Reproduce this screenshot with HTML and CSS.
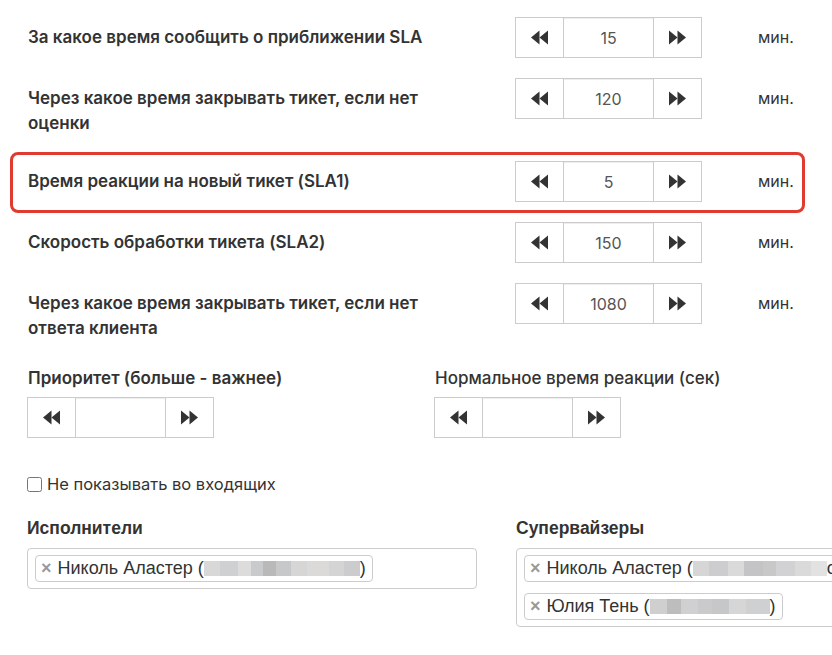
FILE: index.html
```html
<!DOCTYPE html>
<html lang="ru">
<head>
    <meta charset="UTF-8">
    <meta name="viewport" content="width=device-width, initial-scale=1.0">
    <title>Настройки SLA</title>
    <link rel="stylesheet" href="styles.css">
</head>
<body>
    <div class="settings">
        <div class="sla-row">
            <label class="sla-label">За какое время сообщить о приближении SLA</label>
            <div class="spinner">
                <button class="spin-btn"><svg viewBox="0 0 18 15"><polygon points="9,0 9,15 0,7.5"/><polygon points="18,0 18,15 9,7.5"/></svg></button>
                <input class="spin-value" type="text" value="15">
                <button class="spin-btn"><svg viewBox="0 0 18 15"><polygon points="0,0 0,15 9,7.5"/><polygon points="9,0 9,15 18,7.5"/></svg></button>
            </div>
            <span class="unit">мин.</span>
        </div>

        <div class="sla-row">
            <label class="sla-label">Через какое время закрывать тикет, если нет оценки</label>
            <div class="spinner">
                <button class="spin-btn"><svg viewBox="0 0 18 15"><polygon points="9,0 9,15 0,7.5"/><polygon points="18,0 18,15 9,7.5"/></svg></button>
                <input class="spin-value" type="text" value="120">
                <button class="spin-btn"><svg viewBox="0 0 18 15"><polygon points="0,0 0,15 9,7.5"/><polygon points="9,0 9,15 18,7.5"/></svg></button>
            </div>
            <span class="unit">мин.</span>
        </div>

        <!-- выделенная строка -->
        <div class="highlight">
            <div class="sla-row">
                <label class="sla-label">Время реакции на новый тикет (SLA1)</label>
                <div class="spinner">
                    <button class="spin-btn"><svg viewBox="0 0 18 15"><polygon points="9,0 9,15 0,7.5"/><polygon points="18,0 18,15 9,7.5"/></svg></button>
                    <input class="spin-value" type="text" value="5">
                    <button class="spin-btn"><svg viewBox="0 0 18 15"><polygon points="0,0 0,15 9,7.5"/><polygon points="9,0 9,15 18,7.5"/></svg></button>
                </div>
                <span class="unit">мин.</span>
            </div>
        </div>

        <div class="sla-row">
            <label class="sla-label">Скорость обработки тикета (SLA2)</label>
            <div class="spinner">
                <button class="spin-btn"><svg viewBox="0 0 18 15"><polygon points="9,0 9,15 0,7.5"/><polygon points="18,0 18,15 9,7.5"/></svg></button>
                <input class="spin-value" type="text" value="150">
                <button class="spin-btn"><svg viewBox="0 0 18 15"><polygon points="0,0 0,15 9,7.5"/><polygon points="9,0 9,15 18,7.5"/></svg></button>
            </div>
            <span class="unit">мин.</span>
        </div>

        <div class="sla-row">
            <label class="sla-label">Через какое время закрывать тикет, если нет ответа клиента</label>
            <div class="spinner">
                <button class="spin-btn"><svg viewBox="0 0 18 15"><polygon points="9,0 9,15 0,7.5"/><polygon points="18,0 18,15 9,7.5"/></svg></button>
                <input class="spin-value" type="text" value="1080">
                <button class="spin-btn"><svg viewBox="0 0 18 15"><polygon points="0,0 0,15 9,7.5"/><polygon points="9,0 9,15 18,7.5"/></svg></button>
            </div>
            <span class="unit">мин.</span>
        </div>

        <div class="pair-row">
            <div class="field">
                <label class="field-label">Приоритет (больше - важнее)</label>
                <div class="spinner">
                    <button class="spin-btn"><svg viewBox="0 0 18 15"><polygon points="9,0 9,15 0,7.5"/><polygon points="18,0 18,15 9,7.5"/></svg></button>
                    <input class="spin-value" type="text" value="">
                    <button class="spin-btn"><svg viewBox="0 0 18 15"><polygon points="0,0 0,15 9,7.5"/><polygon points="9,0 9,15 18,7.5"/></svg></button>
                </div>
            </div>
            <div class="field">
                <label class="field-label light">Нормальное время реакции (сек)</label>
                <div class="spinner">
                    <button class="spin-btn"><svg viewBox="0 0 18 15"><polygon points="9,0 9,15 0,7.5"/><polygon points="18,0 18,15 9,7.5"/></svg></button>
                    <input class="spin-value" type="text" value="">
                    <button class="spin-btn"><svg viewBox="0 0 18 15"><polygon points="0,0 0,15 9,7.5"/><polygon points="9,0 9,15 18,7.5"/></svg></button>
                </div>
            </div>
        </div>

        <label class="check-row"><input type="checkbox" class="check">Не показывать во входящих</label>

        <div class="users-row">
            <div class="field">
                <label class="users-label">Исполнители</label>
                <div class="tag-box">
                    <span class="tag"><span class="tag-x">×</span>Николь Аластер (<span class="blur blur-a"></span>)</span>
                </div>
            </div>
            <div class="field">
                <label class="users-label">Супервайзеры</label>
                <div class="tag-box">
                    <span class="tag"><span class="tag-x">×</span>Николь Аластер (<span class="blur blur-b"></span>om)</span>
                    <span class="tag"><span class="tag-x">×</span>Юлия Тень (<span class="blur blur-c"></span>)</span>
                </div>
            </div>
        </div>
    </div>
</body>
</html>
```

FILE: styles.css
```css
* {
    margin: 0;
    padding: 0;
    box-sizing: border-box;
}

html {
    overflow: hidden;
}

body {
    background-color: #ffffff;
    font-family: Inter, "Open Sans", sans-serif;
    color: #333333;
    font-size: 16px;
}

.settings {
    width: 1000px;
    padding: 17px 0 0 27px;
}

/* строки SLA */
.sla-row {
    display: grid;
    grid-template-columns: 488px 243px auto;
    align-items: start;
    margin-bottom: 20px;
}

.sla-label {
    display: block;
    padding: 8px 57px 5px 1px;
    font-size: 17px;
    font-weight: 600;
    line-height: 25px;
}

.unit {
    padding-top: 8px;
    line-height: 25px;
}

.highlight {
    width: 795px;
    margin: -9px 0 9px -17px;
    padding: 6px 0 8px 14px;
    border: 3px solid #e03b31;
    border-radius: 8px;
}

.highlight .sla-row {
    margin-bottom: 0;
}

/* спиннер */
.spinner {
    display: flex;
    width: 187px;
    height: 41px;
    border: 1px solid #cccccc;
}

.spin-btn {
    width: 47px;
    border: none;
    background-color: #ffffff;
    display: flex;
    align-items: center;
    justify-content: center;
    cursor: pointer;
}

.spin-btn svg {
    width: 17px;
    height: 15px;
    fill: #333333;
}

.spin-value {
    width: 91px;
    border: none;
    border-left: 1px solid #cccccc;
    border-right: 1px solid #cccccc;
    box-shadow: inset 0 1px 1px rgba(0, 0, 0, 0.075);
    text-align: center;
    font-family: Inter, sans-serif;
    font-size: 16px;
    color: #555555;
    outline: none;
}

/* приоритет */
.pair-row {
    display: grid;
    grid-template-columns: 407px 400px;
}

.field-label {
    display: block;
    font-size: 17px;
    font-weight: 600;
    line-height: 25px;
    margin-bottom: 6px;
    padding-left: 1px;
}

.field-label.light {
    font-weight: 500;
}

.check-row {
    display: flex;
    align-items: center;
    margin-top: 34px;
    font-size: 16.5px;
    line-height: 25px;
}

.check {
    width: 15px;
    height: 15px;
    margin-right: 5px;
}

/* исполнители */
.users-row {
    display: grid;
    grid-template-columns: 489px 489px;
    margin-top: 19px;
}

.users-label {
    display: block;
    font-family: "Liberation Sans", Arial, sans-serif;
    font-weight: bold;
    font-size: 17.5px;
    line-height: 25px;
    margin-bottom: 7px;
}

.tag-box {
    display: flex;
    flex-wrap: wrap;
    row-gap: 11px;
    column-gap: 5px;
    width: 450px;
    padding: 6px 7px;
    border: 1px solid #cccccc;
    border-radius: 4px;
}

.tag {
    display: inline-flex;
    align-items: center;
    height: 27px;
    padding: 0 6px 0 5px;
    border: 1px solid #cccccc;
    border-radius: 4px;
    font-family: "Liberation Sans", Arial, sans-serif;
    font-size: 18px;
    color: #333333;
    white-space: nowrap;
}

.tag-x {
    color: #999999;
    font-weight: bold;
    font-size: 18px;
    margin-right: 6px;
}

.blur {
    display: inline-block;
    height: 15px;
}

.blur-a {
    width: 156px;
    background: linear-gradient(90deg, #d8d8d8 0 10%, #cfd0d2 10% 22%, #dcdcdc 22% 30%, #c9cacc 30% 38%, #b9b9b9 38% 46%, #c7c8ca 46% 56%, #d6d6d6 56% 66%, #dbdad9 66% 80%, #d4d4d4 80% 90%, #ccccce 90% 100%);
}

.blur-b {
    width: 134px;
    background: linear-gradient(90deg, #d6d6d6 0 12%, #cdcdcf 12% 26%, #dadada 26% 38%, #c4c4c6 38% 52%, #c8c8c8 52% 62%, #d2d2d4 62% 76%, #dadada 76% 88%, #e2e2e2 88% 100%);
}

.blur-c {
    width: 120px;
    background: linear-gradient(90deg, #cfcfcf 0 14%, #bdbdbd 14% 26%, #d0d0d2 26% 40%, #cacaca 40% 52%, #c6c7c9 52% 66%, #d6d6d6 66% 80%, #cfd0d2 80% 100%);
}
```
